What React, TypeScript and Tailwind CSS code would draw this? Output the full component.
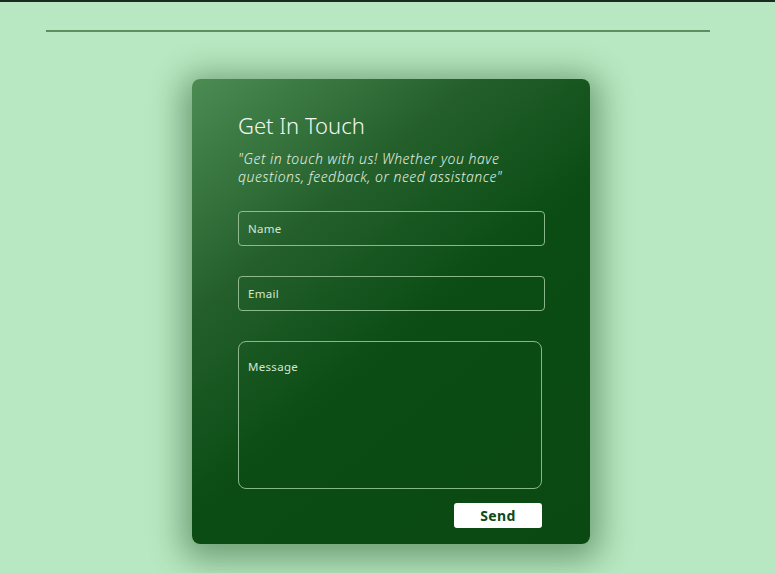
export default function App() {
  return (
    <div
      className="min-h-[573px] w-full overflow-hidden border-t-2 border-[#1d2a1f] bg-[#b8e8c1]"
      style={{ fontFamily: '"Noto Sans", "Open Sans", sans-serif' }}
    >
      {/* header rule */}
      <div className="ml-[46px] mt-[28px] h-[2px] w-[664px] bg-[#5b8f60]" />

      <div className="ml-[192px] mt-[47px] flex h-[465px] w-[398px] flex-col rounded-lg bg-[linear-gradient(140deg,#4c8c53_0%,#245f2b_30%,#0a4c14_55%,#0a4a12_100%)] px-[46px] pt-[32px] shadow-[0_6px_32px_10px_rgba(20,70,25,0.45)]">
        <h1 className="text-[22px] font-light leading-[28px] text-[#f1f7f1]">Get In Touch</h1>
        <p className="mt-[11px] text-[14px] font-light italic leading-[18px] tracking-[0.5px] text-[#e2efe2]">
          "Get in touch with us! Whether you have
          <br />
          questions, feedback, or need assistance"
        </p>

        <input
          placeholder="Name"
          className="mt-[25px] h-[35px] w-[307px] rounded-[4px] border border-[#a9cfa9]/80 bg-transparent px-[9px] text-[11.5px] tracking-[0.3px] text-white outline-none placeholder:text-[#d4e6d4]"
        />
        <input
          placeholder="Email"
          className="mt-[30px] h-[35px] w-[307px] rounded-[4px] border border-[#a9cfa9]/80 bg-transparent px-[9px] text-[11.5px] tracking-[0.3px] text-white outline-none placeholder:text-[#d4e6d4]"
        />
        <textarea
          placeholder="Message"
          className="mt-[30px] h-[148px] w-[304px] resize-none rounded-lg border border-[#a9cfa9]/80 bg-transparent px-[9px] pt-[16px] text-[11.5px] tracking-[0.3px] text-white outline-none placeholder:text-[#d4e6d4]"
        />

        <div className="mt-[14px] flex w-[304px] justify-end">
          <button className="h-[25px] w-[88px] rounded-[3px] bg-white text-[14px] font-bold tracking-[0.4px] text-[#0d4a17]">
            Send
          </button>
        </div>
      </div>
    </div>
  )
}
